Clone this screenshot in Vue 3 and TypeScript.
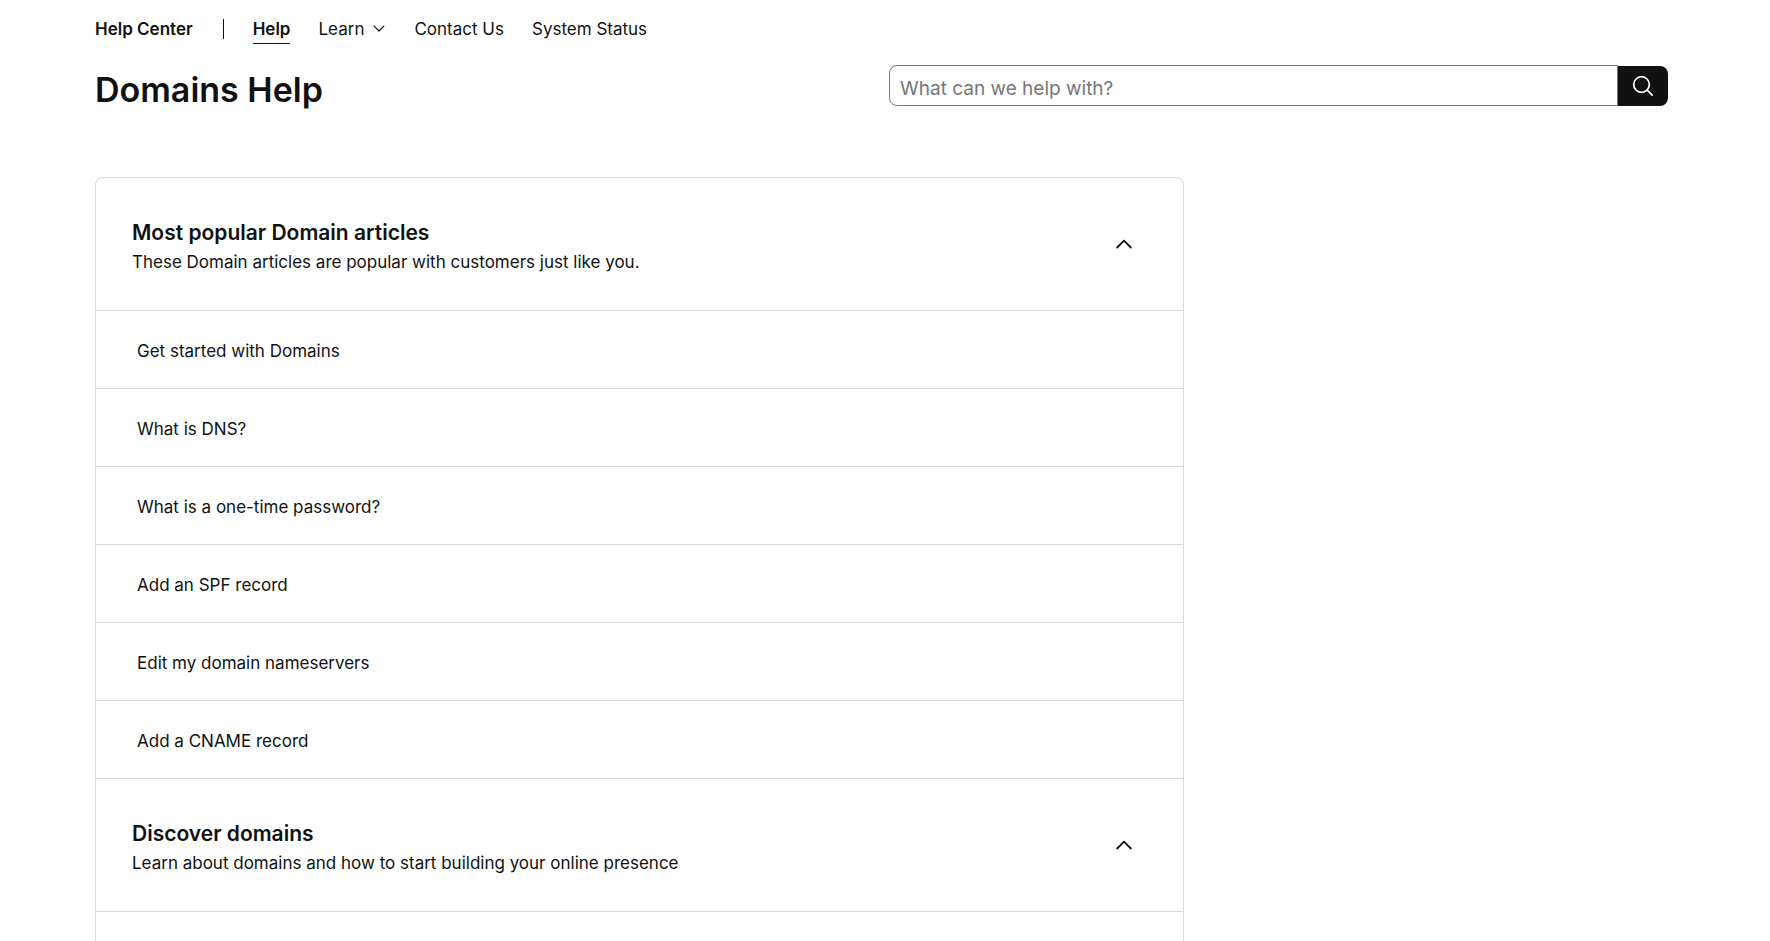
<script setup lang="ts">
import { ref } from 'vue'

interface Section {
  id: string
  title: string
  subtitle: string
  open: boolean
  articles: string[]
}

const query = ref('')
const learnOpen = ref(false)

const sections = ref<Section[]>([
  {
    id: 'popular',
    title: 'Most popular Domain articles',
    subtitle: 'These Domain articles are popular with customers just like you.',
    open: true,
    articles: [
      'Get started with Domains',
      'What is DNS?',
      'What is a one-time password?',
      'Add an SPF record',
      'Edit my domain nameservers',
      'Add a CNAME record',
    ],
  },
  {
    id: 'discover',
    title: 'Discover domains',
    subtitle: 'Learn about domains and how to start building your online presence',
    open: true,
    articles: [],
  },
])
</script>

<template>
  <div class="page">
    <nav class="nav" aria-label="Help Center">
      <a class="brand" href="#">Help Center</a>
      <span class="divider"></span>
      <a class="active" href="#" aria-current="page">Help</a>
      <button class="learn" type="button" :aria-expanded="learnOpen" @click="learnOpen = !learnOpen">
        Learn
        <svg width="14" height="8" viewBox="0 0 14 8" fill="none" stroke="#111" stroke-width="1.2" stroke-linecap="round" stroke-linejoin="round" aria-hidden="true">
          <path d="M2.200 1.200 7 6l4.800-4.800" />
        </svg>
      </button>
      <a href="#">Contact Us</a>
      <a href="#">System Status</a>
    </nav>

    <header class="head">
      <h1>Domains Help</h1>
      <form class="search" role="search" @submit.prevent>
        <input v-model="query" type="text" placeholder="What can we help with?" aria-label="Search help" />
        <button type="submit" aria-label="Search">
          <svg width="22" height="22" viewBox="0 0 22 22" fill="none" stroke="#fff" stroke-width="1.700" stroke-linecap="round" aria-hidden="true">
            <circle cx="9.500" cy="9.500" r="7.800" />
            <path d="m15.200 15.200 5 5" />
          </svg>
        </button>
      </form>
    </header>

    <main class="card">
      <section v-for="s in sections" :key="s.id" class="section">
        <button class="toggle" type="button" :aria-expanded="s.open" @click="s.open = !s.open">
          <span class="labels">
            <span class="title">{{ s.title }}</span>
            <span class="subtitle">{{ s.subtitle }}</span>
          </span>
          <svg :class="{ closed: !s.open }" width="16" height="10" viewBox="0 0 16 10" fill="none" stroke="#111" stroke-width="1.800" stroke-linecap="round" stroke-linejoin="round" aria-hidden="true">
            <path d="M1.200 8.500 8 1.700l6.800 6.800" />
          </svg>
        </button>
        <ul v-if="s.open">
          <li v-for="a in s.articles" :key="a"><a href="#">{{ a }}</a></li>
        </ul>
      </section>
    </main>
  </div>
</template>

<style>
body {
  margin: 0;
  background: #fff;
}
</style>

<style scoped>
.page {
  box-sizing: border-box;
  height: 100vh;
  overflow: hidden;
  display: flex;
  flex-direction: column;
  padding: 0 95px;
  color: #111;
  font-family: Inter, "Liberation Sans", sans-serif;
  font-size: 17px;
  line-height: 24px;
}

a {
  color: inherit;
  text-decoration: none;
}

button {
  margin: 0;
  padding: 0;
  border: 0;
  background: none;
  color: inherit;
  font: inherit;
  cursor: pointer;
}

.nav {
  flex: none;
  display: flex;
  align-items: center;
  gap: 28px;
  height: 58px;
  white-space: nowrap;
}

.brand,
.active {
  font-weight: 600;
}

.divider {
  width: 1px;
  height: 20px;
  margin: 0 1px 0 2px;
  background: #111;
}

.active {
  padding: 3px 0 2px;
  border-bottom: 1px solid #111;
}

.learn {
  display: flex;
  align-items: center;
  gap: 8px;
}

.head {
  flex: none;
  display: grid;
  grid-template-columns: 1fr 1fr;
  height: 119px;
}

h1 {
  margin: 10px 0 0;
  font-size: 34px;
  line-height: 44px;
  font-weight: 600;
}

.search {
  display: flex;
  height: 41px;
  margin: 7px 7px 0 4px;
}

.search input {
  flex: 1;
  min-width: 0;
  box-sizing: border-box;
  padding: 14px 10px 9px;
  border: 1px solid #767676;
  border-radius: 8px 0 0 8px;
  background: #fff;
  color: #111;
  font: inherit;
  font-size: 19px;
  line-height: 16px;
  outline: none;
}

.search input::placeholder {
  color: #767676;
  opacity: 1;
  line-height: 16px;
}

.search button {
  display: flex;
  align-items: center;
  justify-content: center;
  width: 50px;
  margin-top: 1px;
  border-radius: 0 8px 8px 0;
  background: #111;
}

.card {
  flex: 1 0 auto;
  box-sizing: border-box;
  width: 68.9%;
  border: 1px solid #d6dbe0;
  border-bottom: 0;
  border-radius: 8px 8px 0 0;
}

.toggle {
  box-sizing: border-box;
  display: flex;
  align-items: center;
  justify-content: space-between;
  width: 100%;
  height: 133px;
  padding: 0 51px 0 36px;
  border-bottom: 1px solid #d6dbe0;
  text-align: left;
}

.labels {
  display: flex;
  flex-direction: column;
  gap: 3px;
  padding-top: 5px;
}

.title {
  font-size: 21px;
  line-height: 28px;
  font-weight: 600;
}

.closed {
  transform: rotate(180deg);
}

ul {
  margin: 0;
  padding: 0;
  list-style: none;
}

li {
  box-sizing: border-box;
  display: flex;
  align-items: center;
  height: 78px;
  padding: 2px 41px 0;
  border-bottom: 1px solid #d6dbe0;
}
</style>
